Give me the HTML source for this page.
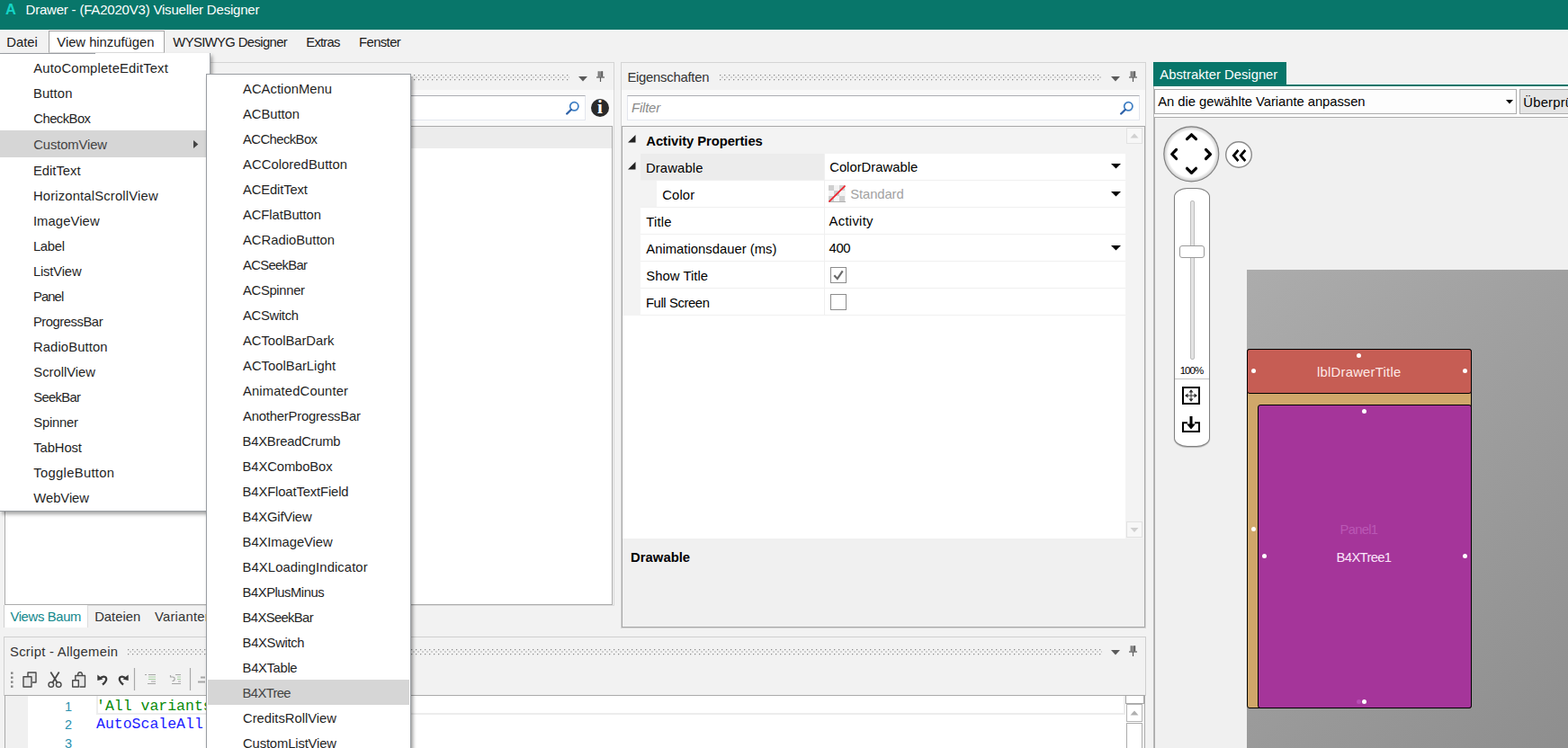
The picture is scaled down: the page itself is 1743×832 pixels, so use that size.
<!DOCTYPE html>
<html lang="de"><head><meta charset="utf-8"><title>Drawer - (FA2020V3) Visueller Designer</title>
<style>
html,body{margin:0;padding:0;}
body{width:1743px;height:832px;overflow:hidden;background:#F0F0F0;position:relative;font-family:'Liberation Sans', sans-serif;}
#app{position:absolute;left:0;top:0;width:1743px;height:832px;overflow:hidden;}
#app div,#app span.t{position:absolute;}
span.t{white-space:pre;}
</style></head><body><div id="app">
<div style="left:0px;top:0px;width:1743px;height:33px;background:#08766A"></div>
<span class="t" style="left:6.00px;top:-0.80px;font-size:16.5px;line-height:23px;color:#14D4C6;font-weight:700;">A</span>
<span class="t" style="left:28.50px;top:0.20px;font-size:15px;line-height:21px;color:#fff;letter-spacing:-0.198px;">Drawer - (FA2020V3) Visueller Designer</span>
<div style="left:0px;top:33px;width:1743px;height:27px;background:#F2F2F2"></div>
<div style="left:54px;top:34px;width:129px;height:25px;background:#fff;border:1px solid #A5A5A5;border-bottom:1px solid #DDD;box-sizing:border-box"></div>
<span class="t" style="left:7.20px;top:37.00px;font-size:14.8px;line-height:21px;color:#1a1a1a;letter-spacing:0.013px;">Datei</span>
<span class="t" style="left:63.30px;top:37.00px;font-size:14.8px;line-height:21px;color:#1a1a1a;letter-spacing:-0.016px;">View hinzufügen</span>
<span class="t" style="left:192.30px;top:37.00px;font-size:14.8px;line-height:21px;color:#1a1a1a;letter-spacing:-0.607px;">WYSIWYG Designer</span>
<span class="t" style="left:340.30px;top:37.00px;font-size:14.8px;line-height:21px;color:#1a1a1a;letter-spacing:-0.767px;">Extras</span>
<span class="t" style="left:399.10px;top:37.00px;font-size:14.8px;line-height:21px;color:#1a1a1a;letter-spacing:-0.595px;">Fenster</span>
<div style="left:0px;top:60px;width:1743px;height:772px;background:#F2F2F2"></div>
<svg width="0" height="0" style="position:absolute"><defs>
<pattern id="grip" x="0" y="0" width="5" height="5" patternUnits="userSpaceOnUse">
<circle cx="0.5" cy="0.5" r="0.85" fill="#8A8A8A"/><circle cx="3" cy="3" r="1" fill="#C4C4C4"/>
</pattern></defs></svg>
<div style="left:0px;top:69px;width:683px;height:31px;background:#F2F2F2;border:1px solid #D4D4D4;border-bottom:none;border-left:none;box-sizing:border-box"></div>
<div style="left:0px;top:100px;width:682px;height:40px;background:#F9F9F9"></div>
<div style="left:682px;top:100px;width:1px;height:574px;background:#D8D8D8"></div>
<div style="left:98px;top:673px;width:585px;height:1px;background:#DEDEDE"></div>
<svg style="position:absolute;left:240px;top:83px" width="393" height="7" viewBox="0 0 393 7"><rect x="-1" y="-1" width="394" height="8" fill="url(#grip)"/></svg>
<svg style="position:absolute;left:643px;top:85px" width="10" height="6"><path d="M0 0H10L5 5.500Z" fill="#5A5A5A"/></svg>
<svg style="position:absolute;left:663px;top:79.3px" width="10" height="13"><path d="M2 0.300H7V6.500H2Z" fill="#8A8A8A"/><path d="M5.500 0.300H7.200V6.500H5.500Z" fill="#5A5A5A"/><path d="M2 0.300V6.500" stroke="#666" stroke-width="0.800"/><path d="M0 7H9" stroke="#5A5A5A" stroke-width="1.200"/><path d="M4.500 7V12" stroke="#5A5A5A" stroke-width="1.200"/></svg>
<div style="left:5px;top:106px;width:646px;height:28px;background:#fff;border:1px solid #E3E6EE;border-top-color:#ABADB3;box-sizing:border-box"></div>
<svg style="position:absolute;left:628px;top:112px" width="16" height="16" viewBox="0 0 16 16"><circle cx="10.300" cy="6.300" r="4.600" fill="#fff" stroke="#3F7FC4" stroke-width="1.800"/><path d="M6.800 10L2.200 14.500" stroke="#2F62A8" stroke-width="2.400" stroke-linecap="round"/></svg>
<div style="left:657px;top:110.400px;width:20px;height:20px;border-radius:50%;background:#2A2A2A;color:#fff;font:bold 21px/19px 'Liberation Serif',serif;text-align:center">i</div>
<div style="left:5px;top:140px;width:676px;height:533px;background:#fff;border:1px solid #ABABAB;box-sizing:border-box"></div>
<div style="left:6px;top:141px;width:674px;height:24px;background:#ECECEC"></div>
<div style="left:4px;top:673px;width:94px;height:25px;background:#fff;border-left:1px solid #CFCFCF;border-right:1px solid #DCDCDC;box-sizing:border-box"></div>
<span class="t" style="left:11.40px;top:676.00px;font-size:14.8px;line-height:21px;color:#12878C;letter-spacing:-0.330px;">Views Baum</span>
<span class="t" style="left:105.20px;top:676.00px;font-size:14.8px;line-height:21px;color:#333;">Dateien</span>
<span class="t" style="left:172.00px;top:676.00px;font-size:14.8px;line-height:21px;color:#333;letter-spacing:0.219px;">Varianten</span>
<div style="left:4px;top:708px;width:1270px;height:66px;background:#F2F2F2;border:1px solid #CFCFCF;border-bottom:none;box-sizing:border-box"></div>
<span class="t" style="left:11.00px;top:715.00px;font-size:14.8px;line-height:21px;color:#333;letter-spacing:0.286px;">Script - Allgemein</span>
<svg style="position:absolute;left:142px;top:722px" width="1083" height="7" viewBox="0 0 1083 7"><rect x="-1" y="-1" width="1084" height="8" fill="url(#grip)"/></svg>
<svg style="position:absolute;left:1235px;top:723px" width="10" height="6"><path d="M0 0H10L5 5.500Z" fill="#5A5A5A"/></svg>
<svg style="position:absolute;left:1255px;top:718.3px" width="10" height="13"><path d="M2 0.300H7V6.500H2Z" fill="#8A8A8A"/><path d="M5.500 0.300H7.200V6.500H5.500Z" fill="#5A5A5A"/><path d="M2 0.300V6.500" stroke="#666" stroke-width="0.800"/><path d="M0 7H9" stroke="#5A5A5A" stroke-width="1.200"/><path d="M4.500 7V12" stroke="#5A5A5A" stroke-width="1.200"/></svg>
<svg style="position:absolute;left:0px;top:738px" width="240" height="36" viewBox="0 738 240 36">
<g fill="#808080"><rect x="12" y="747.500" width="2.5" height="2.300"/><rect x="12" y="752.500" width="2.5" height="2.300"/><rect x="12" y="757.500" width="2.5" height="2.300"/><rect x="12" y="762.500" width="2.5" height="2.300"/></g>
<g fill="none" stroke="#4A4A4A" stroke-width="1.400" stroke-linejoin="round">
<path d="M31 752V748H40V759H36" fill="#E6E6E6"/><rect x="26" y="752.800" width="9" height="11.200" fill="#E4E4E4"/>
<path d="M56.300 747.500L63.800 759.500M65.700 747.500L58.200 759.500" stroke-width="1.800"/><circle cx="56.800" cy="761.500" r="2.800" fill="#F2F2F2"/><circle cx="65.200" cy="761.500" r="2.800" fill="#F2F2F2"/>
<path d="M88.500 764H94.500V751.500H83.800V756" fill="#E6E6E6"/><path d="M86.500 751.500C86.500 746.500 91.500 746.500 91.500 751.500"/><rect x="80.700" y="756.800" width="6.600" height="7.200" fill="#F2F2F2"/>
</g>
<g fill="none" stroke="#3A3A3A" stroke-width="2.300">
<path d="M111 754.500C117 749.500 122 755 114 761.500"/><path d="M140 754.500C134 749.500 129 755 137 761.500"/>
</g>
<path d="M108.300 750.500L114.500 755.500L108.300 757Z" fill="#3A3A3A"/><path d="M142.700 750.500L136.500 755.500L142.700 757Z" fill="#3A3A3A"/>
<path d="M149.500 743V768M211.500 743V768" stroke="#A8A8A8" stroke-width="1.200"/>
<g stroke-width="1.200" fill="none">
<path d="M161 750.500H163M165 750.500H173M168 758H173M164 760.500H173" stroke="#A5A5A5"/><path d="M165 753H173M165 755.500H173" stroke="#A9CFA3"/>
<path d="M195 750.500H201M198 758H201M191 760.500H201" stroke="#A5A5A5"/><path d="M197 753H201M197 755.500H201" stroke="#A9CFA3"/><path d="M189.500 751V753H192C195 753 195 757.500 191.500 757.500" stroke="#A5A5A5"/>
<path d="M223 753.500H228M220 758.500H228" stroke="#A5A5A5" stroke-width="2"/>
</g></svg>
<div style="left:5px;top:773px;width:1268px;height:60px;background:#fff;border:1px solid #ABABAB;box-sizing:border-box"></div>
<div style="left:6px;top:774px;width:25px;height:58px;background:#F0F0F0"></div>
<div style="left:107px;top:774px;width:1144px;height:21px;background:#fff;border:2px solid #EDEDED;border-top:none;box-sizing:border-box"></div>
<span class="t" style="left:72.00px;top:775.50px;font-size:14.5px;line-height:20px;color:#2B91AF;">1</span>
<span class="t" style="left:72.00px;top:796.10px;font-size:14.5px;line-height:20px;color:#2B91AF;">2</span>
<span class="t" style="left:72.00px;top:816.70px;font-size:14.5px;line-height:20px;color:#2B91AF;">3</span>
<span class="t" style="left:107.00px;top:773.80px;font-size:16.5px;line-height:23px;color:#0A8A0A;font-family:'Liberation Mono', monospace;">&#x27;All variants script</span>
<span class="t" style="left:107.00px;top:794.40px;font-size:16.5px;line-height:23px;color:#1C1CFF;font-family:'Liberation Mono', monospace;">AutoScaleAll</span>
<div style="left:1251px;top:774px;width:21px;height:58px;background:#fff"></div>
<div style="left:1251px;top:773px;width:21px;height:10px;background:#fff;border:1px solid #A8A8A8;box-sizing:border-box"></div>
<div style="left:1252px;top:783px;width:18px;height:20px;background:#fff;border:1px solid #B4B4B4;box-sizing:border-box"><svg width="16" height="18" style="position:absolute;left:0;top:0"><path d="M3.500 11.5L8 6.500L12.5 11.500Z" fill="#B0B0B0"/></svg></div>
<div style="left:1252px;top:804px;width:18px;height:30px;background:#fff;border:1px solid #ABABAB;box-sizing:border-box"></div>
<div style="left:690px;top:69px;width:584px;height:31px;background:#F2F2F2;border:1px solid #D4D4D4;border-bottom:none;box-sizing:border-box"></div>
<div style="left:691px;top:100px;width:582px;height:40px;background:#F9F9F9"></div>
<div style="left:690px;top:100px;width:1px;height:599px;background:#D4D4D4"></div>
<div style="left:1273px;top:100px;width:1px;height:599px;background:#D4D4D4"></div>
<div style="left:690px;top:698px;width:584px;height:1px;background:#D4D4D4"></div>
<span class="t" style="left:697.40px;top:76.00px;font-size:14.8px;line-height:21px;color:#333;letter-spacing:-0.232px;">Eigenschaften</span>
<svg style="position:absolute;left:800px;top:83px" width="424" height="7" viewBox="0 0 424 7"><rect x="-1" y="-1" width="425" height="8" fill="url(#grip)"/></svg>
<svg style="position:absolute;left:1235px;top:85px" width="10" height="6"><path d="M0 0H10L5 5.500Z" fill="#5A5A5A"/></svg>
<svg style="position:absolute;left:1255px;top:79.3px" width="10" height="13"><path d="M2 0.300H7V6.500H2Z" fill="#8A8A8A"/><path d="M5.500 0.300H7.200V6.500H5.500Z" fill="#5A5A5A"/><path d="M2 0.300V6.500" stroke="#666" stroke-width="0.800"/><path d="M0 7H9" stroke="#5A5A5A" stroke-width="1.200"/><path d="M4.500 7V12" stroke="#5A5A5A" stroke-width="1.200"/></svg>
<div style="left:697px;top:106px;width:570px;height:28px;background:#fff;border:1px solid #E3E6EE;border-top-color:#ABADB3;box-sizing:border-box"></div>
<span class="t" style="left:702.10px;top:110.00px;font-size:14.8px;line-height:21px;color:#8A8A8A;font-style:italic;letter-spacing:-0.178px;">Filter</span>
<svg style="position:absolute;left:1244px;top:112px" width="16" height="16" viewBox="0 0 16 16"><circle cx="10.300" cy="6.300" r="4.600" fill="#fff" stroke="#3F7FC4" stroke-width="1.800"/><path d="M6.800 10L2.200 14.500" stroke="#2F62A8" stroke-width="2.400" stroke-linecap="round"/></svg>
<div style="left:691px;top:140px;width:582px;height:558px;background:#fff;border:1px solid #A8A8A8;box-sizing:border-box"></div>
<div style="left:692px;top:141px;width:559px;height:30px;background:#F3F3F3"></div>
<div style="left:692px;top:171px;width:20px;height:180px;background:#F3F3F3"></div>
<div style="left:1251px;top:141px;width:21px;height:458px;background:#F3F3F3"></div>
<div style="left:692px;top:599px;width:580px;height:98px;background:#F0F0F0"></div>
<svg style="position:absolute;left:697.5px;top:150.3px" width="9" height="9"><path d="M8.5 0V8.5H0Z" fill="#222"/></svg>
<svg style="position:absolute;left:697.5px;top:180.3px" width="9" height="9"><path d="M8.5 0V8.5H0Z" fill="#222"/></svg>
<span class="t" style="left:718.30px;top:146.60px;font-size:14.8px;line-height:21px;color:#000;font-weight:700;letter-spacing:-0.070px;">Activity Properties</span>
<div style="left:712px;top:171px;width:204px;height:29px;background:#ECECEC"></div>
<div style="left:712px;top:200px;width:539px;height:1px;background:#F0F0F0"></div>
<span class="t" style="left:717.90px;top:177.00px;font-size:14.8px;line-height:21px;color:#000;letter-spacing:0.155px;">Drawable</span>
<div style="left:712px;top:201px;width:18px;height:29px;background:#F3F3F3"></div>
<div style="left:712px;top:230px;width:539px;height:1px;background:#F0F0F0"></div>
<span class="t" style="left:736.30px;top:207.00px;font-size:14.8px;line-height:21px;color:#000;letter-spacing:0.110px;">Color</span>
<div style="left:712px;top:260px;width:539px;height:1px;background:#F0F0F0"></div>
<span class="t" style="left:718.30px;top:237.00px;font-size:14.8px;line-height:21px;color:#000;letter-spacing:0.223px;">Title</span>
<div style="left:712px;top:290px;width:539px;height:1px;background:#F0F0F0"></div>
<span class="t" style="left:718.30px;top:267.00px;font-size:14.8px;line-height:21px;color:#000;letter-spacing:0.019px;">Animationsdauer (ms)</span>
<div style="left:712px;top:320px;width:539px;height:1px;background:#F0F0F0"></div>
<span class="t" style="left:718.30px;top:297.00px;font-size:14.8px;line-height:21px;color:#000;letter-spacing:0.048px;">Show Title</span>
<div style="left:712px;top:350px;width:539px;height:1px;background:#F0F0F0"></div>
<span class="t" style="left:717.90px;top:327.00px;font-size:14.8px;line-height:21px;color:#000;letter-spacing:-0.384px;">Full Screen</span>
<div style="left:916px;top:171px;width:1px;height:180px;background:#F0F0F0"></div>
<span class="t" style="left:922.20px;top:176.00px;font-size:14.8px;line-height:21px;color:#000;letter-spacing:0.010px;">ColorDrawable</span>
<svg style="position:absolute;left:921px;top:206px" width="19" height="19" viewBox="0 0 19 19"><rect width="19" height="19" fill="#F4F4F4"/>
<g fill="#CFCFCF"><rect x="0" y="0" width="6" height="6"/><rect x="12" y="0" width="6" height="6"/><rect x="6" y="6" width="6" height="6"/><rect x="0" y="12" width="6" height="6"/><rect x="12" y="12" width="6" height="6"/></g>
<path d="M0 18.5H19" stroke="#B0B0B0"/><path d="M0.500 18.5L18.5 0.5" stroke="#F0202A" stroke-width="1.6"/></svg>
<span class="t" style="left:945.30px;top:206.00px;font-size:14.8px;line-height:21px;color:#A2A2A2;letter-spacing:-0.095px;">Standard</span>
<span class="t" style="left:921.50px;top:235.70px;font-size:14.8px;line-height:21px;color:#000;letter-spacing:0.304px;">Activity</span>
<span class="t" style="left:921.50px;top:265.90px;font-size:14.8px;line-height:21px;color:#000;letter-spacing:-0.352px;">400</span>
<svg style="position:absolute;left:1235px;top:182px" width="11" height="6"><path d="M0 0H11L5.5 5.5Z" fill="#000"/></svg>
<svg style="position:absolute;left:1235px;top:213px" width="11" height="6"><path d="M0 0H11L5.5 5.5Z" fill="#000"/></svg>
<svg style="position:absolute;left:1235px;top:273px" width="11" height="6"><path d="M0 0H11L5.5 5.5Z" fill="#000"/></svg>
<div style="left:923px;top:297px;width:18px;height:18px;background:#fff;border:1px solid #8C8C8C;box-sizing:border-box"><svg width="16" height="16" style="position:absolute;left:0;top:0"><path d="M3.300 8.300L6.800 12L12.700 3.300" fill="none" stroke="#6B6B6B" stroke-width="2.200"/></svg></div>
<div style="left:923px;top:327px;width:18px;height:18px;background:#fff;border:1px solid #8C8C8C;box-sizing:border-box"></div>
<div style="left:1252px;top:142px;width:18px;height:18px;background:#F7F7F7;border:1px solid #E2E2E2;box-sizing:border-box"><svg width="16" height="17" style="position:absolute;left:0;top:0"><path d="M3.500 10.5L8 5.500L12.5 10.500Z" fill="#D0D0D0"/></svg></div>
<div style="left:1252px;top:580px;width:18px;height:18px;background:#F7F7F7;border:1px solid #E2E2E2;box-sizing:border-box"><svg width="16" height="17" style="position:absolute;left:0;top:0"><path d="M3.500 6L8 11L12.5 6Z" fill="#D0D0D0"/></svg></div>
<span class="t" style="left:701.10px;top:610.00px;font-size:14.8px;line-height:21px;color:#000;font-weight:700;letter-spacing:0.029px;">Drawable</span>
<div style="left:1282px;top:69px;width:148px;height:27px;background:#08766A"></div>
<div style="left:1282px;top:94px;width:461px;height:2px;background:#08766A"></div>
<span class="t" style="left:1289.30px;top:73.00px;font-size:14.8px;line-height:21px;color:#fff;letter-spacing:0.013px;">Abstrakter Designer</span>
<div style="left:1283px;top:96px;width:460px;height:35px;background:#fff"></div>
<div style="left:1283px;top:99px;width:403px;height:28px;background:#FDFDFD;border:1px solid #ABABAB;box-sizing:border-box"></div>
<span class="t" style="left:1287.30px;top:103.00px;font-size:14.8px;line-height:21px;color:#000;letter-spacing:-0.044px;">An die gewählte Variante anpassen</span>
<svg style="position:absolute;left:1674px;top:111px" width="8" height="5"><path d="M0 0H8L4 4.500Z" fill="#000"/></svg>
<div style="left:1689px;top:99px;width:60px;height:28px;background:#E5E5E5;border:1px solid #ADADAD;box-sizing:border-box"></div>
<span class="t" style="left:1693.30px;top:103.50px;font-size:14.8px;line-height:21px;color:#000;letter-spacing:0.219px;">Überprüfen</span>
<div style="left:1283px;top:130px;width:460px;height:702px;background:#F0F0F0;border-top:1px solid #ABABAB;border-left:1px solid #ABABAB;box-sizing:border-box"></div>
<div style="left:1282px;top:96px;width:1px;height:736px;background:#B8B8B8"></div>
<svg style="position:absolute;left:1290px;top:137px" width="110" height="70" viewBox="0 0 110 70">
<defs><radialGradient id="cg" cx="50%" cy="50%" r="50%"><stop offset="0" stop-color="#fff"/><stop offset="0.84" stop-color="#fff"/><stop offset="1" stop-color="#C8C8C8"/></radialGradient></defs>
<circle cx="34.300" cy="34.300" r="30.500" fill="url(#cg)" stroke="#808080" stroke-width="1.200"/>
<g fill="none" stroke="#000" stroke-width="3.200" stroke-linecap="round" stroke-linejoin="round">
<path d="M29.500 17.600L34.500 12.800L39.500 17.600"/><path d="M29.500 50.300L34.500 55.300L39.500 50.300"/>
<path d="M17.600 29.400L12.700 34.500L17.600 39.500"/><path d="M50.500 29.400L55.500 34.500L50.500 39.500"/>
</g>
<circle cx="87" cy="35" r="14.300" fill="#fff" stroke="#8A8A8A" stroke-width="1.400"/>
<g fill="none" stroke="#000" stroke-width="2.700" stroke-linejoin="miter">
<path d="M86.500 30L81.300 36L86.500 42"/><path d="M94.300 30L89.100 36L94.300 42"/>
</g></svg>
<div style="left:1305px;top:209px;width:40px;height:288px;background:#fff;border:1px solid #808080;border-radius:15px/10px;box-sizing:border-box;box-shadow:0 1px 1px rgba(0,0,0,0.25)"></div>
<div style="left:1323px;top:223px;width:5px;height:177px;background:#E4E4E4;border:1px solid #BDBDBD;border-radius:2px;box-sizing:border-box"></div>
<div style="left:1311px;top:273px;width:28px;height:14px;background:#fff;border:1px solid #9A9A9A;border-radius:3px;box-sizing:border-box"></div>
<span class="t" style="left:1311.70px;top:403.50px;font-size:11.5px;line-height:16px;color:#000;letter-spacing:-0.974px;">100%</span>
<div style="left:1306px;top:421px;width:38px;height:1px;background:#C4C4C4"></div>
<svg style="position:absolute;left:1314px;top:430px" width="20" height="52" viewBox="0 0 20 52">
<rect x="1" y="1" width="18" height="18" fill="#fff" stroke="#000" stroke-width="2"/>
<path d="M10 4V16M4 10H16" stroke="#333" stroke-width="1"/><path d="M10 3L12.5 6.500H7.500ZM10 17L12.5 13.500H7.500ZM3 10L6.500 7.500V12.5ZM17 10L13.5 7.500V12.5Z" fill="#333"/>
<path d="M1 40V50H19V40" fill="none" stroke="#000" stroke-width="2"/><path d="M0 40.300H6M14 40.300H20" stroke="#000" stroke-width="2"/>
<path d="M10 33V43" stroke="#000" stroke-width="3"/><path d="M5 41.500H15L10 47.500Z" fill="#000"/>
</svg>
<div style="left:1386px;top:300px;width:357px;height:532px;background:linear-gradient(135deg,#ACACAC 0%,#8E8E8E 100%)"></div>
<div style="left:1386px;top:388px;width:250px;height:400px;background:#D0A76A;border:1px solid #000;border-radius:3px;box-sizing:border-box"></div>
<div style="left:1386px;top:388px;width:250px;height:50px;background:#C65D54;border:1px solid #000;border-radius:3px;box-sizing:border-box"></div>
<div style="left:1398px;top:450px;width:238px;height:338px;background:#A5359A;border:1px solid #000;border-radius:3px;box-sizing:border-box"></div>
<span class="t" style="left:1463.90px;top:403.80px;font-size:14.8px;line-height:21px;color:#FFE9E6;letter-spacing:0.269px;">lblDrawerTitle</span>
<span class="t" style="left:1489.60px;top:579.00px;font-size:14.8px;line-height:21px;color:#BA58B5;letter-spacing:-0.716px;">Panel1</span>
<span class="t" style="left:1485.60px;top:609.80px;font-size:14.8px;line-height:21px;color:#FBE6FA;letter-spacing:-0.654px;">B4XTree1</span>
<div style="left:1508.0px;top:393.0px;width:5px;height:5px;border-radius:50%;background:#fff"></div>
<div style="left:1391.0px;top:410.0px;width:5px;height:5px;border-radius:50%;background:#fff"></div>
<div style="left:1626.0px;top:410.0px;width:5px;height:5px;border-radius:50%;background:#fff"></div>
<div style="left:1514.0px;top:455.0px;width:5px;height:5px;border-radius:50%;background:#fff"></div>
<div style="left:1391.0px;top:586.0px;width:5px;height:5px;border-radius:50%;background:#fff"></div>
<div style="left:1403.0px;top:616.0px;width:5px;height:5px;border-radius:50%;background:#fff"></div>
<div style="left:1626.0px;top:616.0px;width:5px;height:5px;border-radius:50%;background:#fff"></div>
<div style="left:1508.0px;top:778.0px;width:5px;height:5px;border-radius:50%;background:#B84DB4"></div>
<div style="left:1514.0px;top:778.0px;width:5px;height:5px;border-radius:50%;background:#fff"></div>
<div style="left:0px;top:59px;width:234px;height:510px;background:#fff;border:1px solid #999DA2;border-left:none;border-top:none;box-sizing:border-box;box-shadow:2px 3px 4px rgba(0,0,0,0.35)"></div>
<div style="left:0px;top:59px;width:106px;height:1px;background:#999DA2"></div>
<div style="left:0px;top:145px;width:229px;height:30px;background:#D6D6D6"></div>
<svg style="position:absolute;left:214px;top:155px" width="7" height="11"><path d="M1 1L6.300 5.500L1 10Z" fill="#444"/></svg>
<span class="t" style="left:37.30px;top:66.00px;font-size:14.8px;line-height:21px;color:#1f1f1f;letter-spacing:0.163px;">AutoCompleteEditText</span>
<span class="t" style="left:36.90px;top:94.00px;font-size:14.8px;line-height:21px;color:#1f1f1f;letter-spacing:0.144px;">Button</span>
<span class="t" style="left:37.30px;top:122.00px;font-size:14.8px;line-height:21px;color:#1f1f1f;letter-spacing:-0.536px;">CheckBox</span>
<span class="t" style="left:37.30px;top:150.60px;font-size:14.8px;line-height:21px;color:#444;letter-spacing:-0.122px;">CustomView</span>
<span class="t" style="left:36.90px;top:179.60px;font-size:14.8px;line-height:21px;color:#1f1f1f;letter-spacing:0.008px;">EditText</span>
<span class="t" style="left:36.90px;top:207.60px;font-size:14.8px;line-height:21px;color:#1f1f1f;letter-spacing:0.173px;">HorizontalScrollView</span>
<span class="t" style="left:36.90px;top:235.60px;font-size:14.8px;line-height:21px;color:#1f1f1f;letter-spacing:0.095px;">ImageView</span>
<span class="t" style="left:36.90px;top:263.60px;font-size:14.8px;line-height:21px;color:#1f1f1f;letter-spacing:-0.255px;">Label</span>
<span class="t" style="left:36.90px;top:291.60px;font-size:14.8px;line-height:21px;color:#1f1f1f;letter-spacing:-0.163px;">ListView</span>
<span class="t" style="left:36.90px;top:319.60px;font-size:14.8px;line-height:21px;color:#1f1f1f;letter-spacing:-0.865px;">Panel</span>
<span class="t" style="left:36.90px;top:347.60px;font-size:14.8px;line-height:21px;color:#1f1f1f;letter-spacing:-0.455px;">ProgressBar</span>
<span class="t" style="left:36.90px;top:375.60px;font-size:14.8px;line-height:21px;color:#1f1f1f;letter-spacing:0.125px;">RadioButton</span>
<span class="t" style="left:37.30px;top:403.60px;font-size:14.8px;line-height:21px;color:#1f1f1f;letter-spacing:-0.012px;">ScrollView</span>
<span class="t" style="left:37.30px;top:431.60px;font-size:14.8px;line-height:21px;color:#1f1f1f;letter-spacing:-0.678px;">SeekBar</span>
<span class="t" style="left:37.30px;top:459.60px;font-size:14.8px;line-height:21px;color:#1f1f1f;letter-spacing:-0.219px;">Spinner</span>
<span class="t" style="left:37.30px;top:487.60px;font-size:14.8px;line-height:21px;color:#1f1f1f;letter-spacing:-0.099px;">TabHost</span>
<span class="t" style="left:37.30px;top:515.60px;font-size:14.8px;line-height:21px;color:#1f1f1f;letter-spacing:0.301px;">ToggleButton</span>
<span class="t" style="left:37.30px;top:543.60px;font-size:14.8px;line-height:21px;color:#1f1f1f;letter-spacing:-0.045px;">WebView</span>
<div style="left:229px;top:82px;width:228px;height:760px;background:#fff;border:1px solid #999DA2;box-sizing:border-box;box-shadow:2px 4px 4px rgba(0,0,0,0.4)"></div>
<div style="left:231px;top:756px;width:224px;height:28px;background:#D6D6D6"></div>
<span class="t" style="left:270.00px;top:89.00px;font-size:14.8px;line-height:21px;color:#1f1f1f;letter-spacing:0.027px;">ACActionMenu</span>
<span class="t" style="left:270.00px;top:117.00px;font-size:14.8px;line-height:21px;color:#1f1f1f;letter-spacing:-0.049px;">ACButton</span>
<span class="t" style="left:270.00px;top:145.00px;font-size:14.8px;line-height:21px;color:#1f1f1f;letter-spacing:-0.556px;">ACCheckBox</span>
<span class="t" style="left:270.00px;top:173.00px;font-size:14.8px;line-height:21px;color:#1f1f1f;letter-spacing:0.060px;">ACColoredButton</span>
<span class="t" style="left:270.00px;top:201.00px;font-size:14.8px;line-height:21px;color:#1f1f1f;letter-spacing:-0.134px;">ACEditText</span>
<span class="t" style="left:270.00px;top:229.00px;font-size:14.8px;line-height:21px;color:#1f1f1f;letter-spacing:-0.092px;">ACFlatButton</span>
<span class="t" style="left:270.00px;top:257.00px;font-size:14.8px;line-height:21px;color:#1f1f1f;">ACRadioButton</span>
<span class="t" style="left:270.00px;top:285.00px;font-size:14.8px;line-height:21px;color:#1f1f1f;letter-spacing:-0.664px;">ACSeekBar</span>
<span class="t" style="left:270.00px;top:313.00px;font-size:14.8px;line-height:21px;color:#1f1f1f;letter-spacing:-0.320px;">ACSpinner</span>
<span class="t" style="left:270.00px;top:341.00px;font-size:14.8px;line-height:21px;color:#1f1f1f;letter-spacing:-0.306px;">ACSwitch</span>
<span class="t" style="left:270.00px;top:369.00px;font-size:14.8px;line-height:21px;color:#1f1f1f;letter-spacing:-0.039px;">ACToolBarDark</span>
<span class="t" style="left:270.00px;top:397.00px;font-size:14.8px;line-height:21px;color:#1f1f1f;letter-spacing:0.014px;">ACToolBarLight</span>
<span class="t" style="left:270.00px;top:425.00px;font-size:14.8px;line-height:21px;color:#1f1f1f;letter-spacing:0.132px;">AnimatedCounter</span>
<span class="t" style="left:270.00px;top:453.00px;font-size:14.8px;line-height:21px;color:#1f1f1f;letter-spacing:-0.180px;">AnotherProgressBar</span>
<span class="t" style="left:269.60px;top:481.00px;font-size:14.8px;line-height:21px;color:#1f1f1f;letter-spacing:-0.238px;">B4XBreadCrumb</span>
<span class="t" style="left:269.60px;top:509.00px;font-size:14.8px;line-height:21px;color:#1f1f1f;letter-spacing:-0.117px;">B4XComboBox</span>
<span class="t" style="left:269.60px;top:537.00px;font-size:14.8px;line-height:21px;color:#1f1f1f;letter-spacing:-0.130px;">B4XFloatTextField</span>
<span class="t" style="left:269.60px;top:565.00px;font-size:14.8px;line-height:21px;color:#1f1f1f;letter-spacing:-0.188px;">B4XGifView</span>
<span class="t" style="left:269.60px;top:593.00px;font-size:14.8px;line-height:21px;color:#1f1f1f;letter-spacing:-0.082px;">B4XImageView</span>
<span class="t" style="left:269.60px;top:621.00px;font-size:14.8px;line-height:21px;color:#1f1f1f;letter-spacing:0.089px;">B4XLoadingIndicator</span>
<span class="t" style="left:269.60px;top:649.00px;font-size:14.8px;line-height:21px;color:#1f1f1f;letter-spacing:-0.476px;">B4XPlusMinus</span>
<span class="t" style="left:269.60px;top:677.00px;font-size:14.8px;line-height:21px;color:#1f1f1f;letter-spacing:-0.637px;">B4XSeekBar</span>
<span class="t" style="left:269.60px;top:705.00px;font-size:14.8px;line-height:21px;color:#1f1f1f;letter-spacing:-0.320px;">B4XSwitch</span>
<span class="t" style="left:269.60px;top:733.00px;font-size:14.8px;line-height:21px;color:#1f1f1f;letter-spacing:-0.335px;">B4XTable</span>
<span class="t" style="left:269.60px;top:761.00px;font-size:14.8px;line-height:21px;color:#444;letter-spacing:-0.641px;">B4XTree</span>
<span class="t" style="left:270.00px;top:789.00px;font-size:14.8px;line-height:21px;color:#1f1f1f;letter-spacing:-0.012px;">CreditsRollView</span>
<span class="t" style="left:270.00px;top:817.00px;font-size:14.8px;line-height:21px;color:#1f1f1f;letter-spacing:-0.139px;">CustomListView</span>
</div></body></html>
